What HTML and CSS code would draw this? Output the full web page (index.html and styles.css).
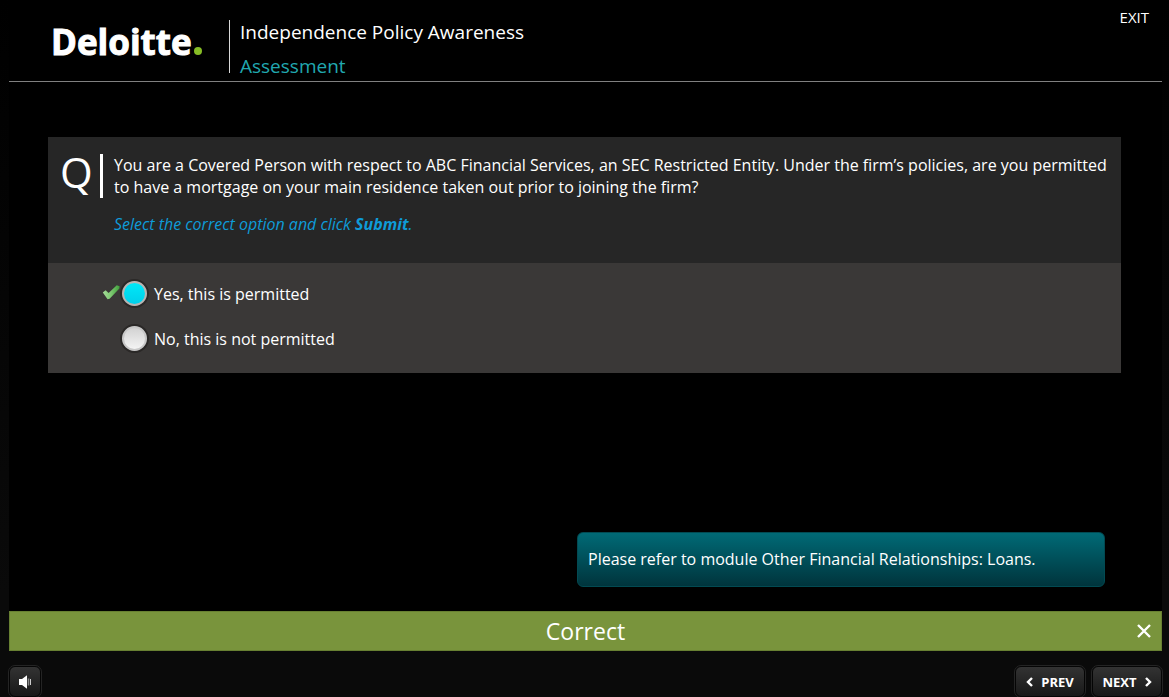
FILE: index.html
```
<!DOCTYPE html>
<html lang="en">
<head>
<meta charset="utf-8">
<meta name="viewport" content="width=device-width, initial-scale=1">
<title>Independence Policy Awareness</title>
<link rel="stylesheet" href="styles.css">
</head>
<body>
<div class="player">
  <header class="header">
    <div class="logo">Deloitte<span class="logo-dot"></span></div>
    <div class="titles">
      <h1 class="course">Independence Policy Awareness</h1>
      <p class="section">Assessment</p>
    </div>
    <a class="exit" href="#">EXIT</a>
  </header>

  <main class="stage">
    <form class="question">
      <div class="prompt">
        <div class="q-mark">Q</div>
        <div class="q-body">
          <p class="q-text" id="q-text">You are a Covered Person with respect to ABC Financial Services, an SEC Restricted Entity. Under the firm’s policies, are you permitted to have a mortgage on your main residence taken out prior to joining the firm?</p>
          <p class="hint">Select the correct option and click <strong>Submit</strong>.</p>
        </div>
      </div>
      <div class="options" role="radiogroup" aria-labelledby="q-text">
        <div class="option">
          <svg class="tick" viewBox="0 0 18 16" aria-hidden="true">
            <defs>
              <linearGradient id="leaf" x1="0" y1="0" x2="1" y2="0">
                <stop offset="0" stop-color="#a5dc98"/>
                <stop offset="0.5" stop-color="#7cc870"/>
                <stop offset="1" stop-color="#3f9f3b"/>
              </linearGradient>
            </defs>
            <path d="M0.8 7.6 L3.6 5.2 L6.6 8 L14.8 0.2 L17.6 1.2 L17.4 3.6 L7.6 13.8 L5.6 14.2 Z" fill="url(#leaf)"/>
          </svg>
          <input class="radio" type="radio" name="answer" id="yes" checked>
          <label for="yes">Yes, this is permitted</label>
        </div>
        <div class="option">
          <span class="tick"></span>
          <input class="radio" type="radio" name="answer" id="no">
          <label for="no">No, this is not permitted</label>
        </div>
      </div>
    </form>
    <p class="reference">Please refer to module Other Financial Relationships: Loans.</p>
  </main>

  <section class="result">
    <h2 class="verdict">Correct</h2>
    <button class="close" type="button" aria-label="Close">
      <svg viewBox="0 0 14 14" width="14" height="14" aria-hidden="true"><path d="M1 1 L13 13 M13 1 L1 13" fill="none" stroke="#fff" stroke-width="2.4"/></svg>
    </button>
  </section>

  <footer class="controls">
    <button class="control sound" type="button" aria-label="Sound">
      <svg viewBox="0 0 14 14" width="14" height="14" aria-hidden="true">
        <path d="M1 4 H4 L9 0.2 V13.8 L4 10 H1 Z" fill="#fff"/>
        <path d="M10.5 3.5 V10.5" stroke="#888" stroke-width="1.6"/>
        <path d="M12.5 4 V10" stroke="#ccc" stroke-width="1"/>
      </svg>
    </button>
    <nav class="pager">
      <button class="control" type="button">
        <svg viewBox="0 0 7 10" width="7" height="10" aria-hidden="true"><path d="M6 1 L2 5 L6 9" fill="none" stroke="#fff" stroke-width="2.4"/></svg>PREV
      </button>
      <button class="control" type="button">
        NEXT<svg viewBox="0 0 7 10" width="7" height="10" aria-hidden="true"><path d="M1 1 L5 5 L1 9" fill="none" stroke="#fff" stroke-width="2.4"/></svg>
      </button>
    </nav>
  </footer>
</div>
</body>
</html>
```

FILE: styles.css
```
* {
  box-sizing: border-box;
}

body {
  margin: 0;
  background: linear-gradient(#000, #0a0a0a 85%);
  color: #fff;
  font: 16px/22px "Open Sans", "Noto Sans", sans-serif;
}

h1, h2, p {
  margin: 0;
  font-weight: 400;
}

button {
  border: 0;
  color: inherit;
  font: inherit;
  cursor: pointer;
}

.player {
  display: flex;
  flex-direction: column;
  min-height: 100vh;
  padding: 0 7px 0 9px;
}

.header {
  display: flex;
  align-items: flex-start;
  padding: 0 13px 8px 42px;
  border-bottom: 1px solid #808080;
  background: #000;
}

.logo {
  display: flex;
  align-items: baseline;
  width: 178px;
  padding-top: 22px;
  font-size: 35px;
  font-weight: 700;
  line-height: 40px;
  -webkit-text-stroke: 1px #fff;
}

.logo-dot {
  width: 8px;
  height: 8px;
  margin-left: 2px;
  border-radius: 50%;
  background: #86bc25;
}

.titles {
  flex: 1;
  height: 53px;
  margin-top: 20px;
  padding-left: 10px;
  border-left: 1px solid #d8d8d8;
}

.course, .section {
  font-size: 19px;
  line-height: 24px;
}

.section {
  margin-top: 10px;
  color: #20a8b0;
}

.exit {
  margin-top: 6px;
  color: #fff;
  font-size: 15px;
  text-decoration: none;
}

.stage {
  display: flex;
  flex: 1;
  flex-direction: column;
  justify-content: space-between;
  padding: 55px 41px 24px 39px;
  background: #000;
}

.prompt {
  display: flex;
  padding: 17px 12px 28px;
  background: #262626;
}

.q-mark {
  flex: none;
  width: 43px;
  height: 44px;
  margin-right: 11px;
  border-right: 3px solid #fff;
  font-size: 42px;
  line-height: 36px;
}

.hint {
  margin-top: 15px;
  color: #0e9bd8;
  font-style: italic;
}

.options {
  display: grid;
  gap: 15px;
  padding: 15px 54px 20px;
  background: #3a3837;
}

.option {
  display: flex;
  align-items: center;
  height: 30px;
}

.option label {
  padding-top: 2px;
}

.tick {
  width: 18px;
  height: 16px;
}

.radio {
  appearance: none;
  width: 25px;
  height: 25px;
  margin: 0 7px 0 2px;
  border: 2px solid #c8c8c8;
  border-radius: 50%;
  background: linear-gradient(#d2d2d2, #f4f4f4);
  box-shadow: 0 0 0 2px #2a2827;
}

.radio:checked {
  border-color: #b8b4b2;
  background: linear-gradient(#00e8f8, #00cfea);
}

.reference {
  align-self: flex-end;
  width: 49%;
  min-width: 528px;
  margin-right: 16px;
  padding: 15px 10px 16px;
  border: 1px solid #024a52;
  border-radius: 6px;
  background: linear-gradient(#006a76, #00343c);
}

.result {
  display: grid;
  grid-template-columns: 1fr auto 1fr;
  align-items: center;
  height: 40px;
  border: 1px solid #688032;
  background: #79943c;
}

.verdict {
  grid-column: 2;
  font-size: 23px;
  line-height: 38px;
}

.close {
  display: flex;
  justify-self: end;
  padding: 10px;
  background: none;
}

.controls {
  display: flex;
  justify-content: space-between;
  padding: 15px 0 0;
}

.pager {
  display: flex;
  gap: 7px;
}

.control {
  display: flex;
  align-items: center;
  justify-content: center;
  gap: 8px;
  min-width: 70px;
  height: 31px;
  padding: 0 8px;
  border: 1px solid #050505;
  border-radius: 6px;
  outline: 1px solid #242424;
  background: linear-gradient(#333, #181818);
  font-size: 13px;
  font-weight: 700;
}

.sound {
  min-width: 32px;
}
```
